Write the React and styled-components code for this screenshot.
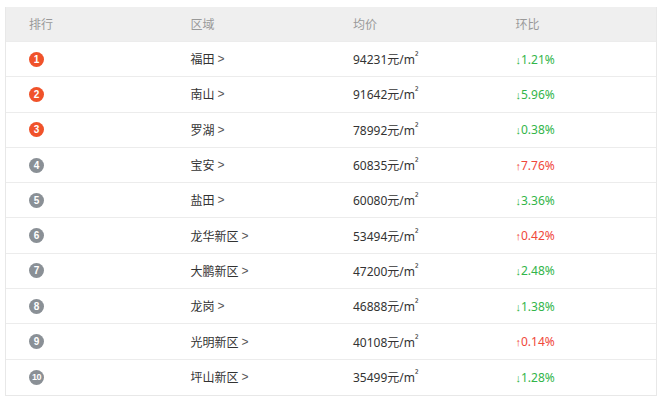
import React from "react";
import styled, { createGlobalStyle } from "styled-components";

const G = createGlobalStyle`
  body { margin: 0; background: #fff; font-family: "Noto Sans", "Noto Sans CJK SC", sans-serif; }
`;
const Wrap = styled.div`padding: 7px 3px 0 5px;`;
const Table = styled.div`border: 1px solid #e8e8e8; border-top: none; width: 650px;`;
const Row = styled.div`
  display: grid; grid-template-columns: repeat(4, 1fr); height: ${p => p.$head ? 35 : 35.3}px;
  align-items: center; background: ${p => p.$head ? "#efefef" : "#fff"};
  border-bottom: ${p => p.$last ? "none" : "1px solid #ececec"}; box-sizing: border-box;
  font-size: 12px; color: ${p => p.$head ? "#999" : "#333"};
`;
const Cell = styled.div`padding-left: ${p => p.$first ? 23 : 22}px; display: flex; align-items: center;`;
const Badge = styled.span`
  width: 15px; height: 15px; border-radius: 50%; background: ${p => p.$top ? "#f0522a" : "#8a9096"};
  color: #fff; font-size: ${p => p.$small ? 9 : 10}px; font-weight: bold; display: flex; align-items: center; justify-content: center;
  font-family: "Liberation Sans", sans-serif; letter-spacing: ${p => p.$small ? -0.5 : 0}px;
`;
const Chevron = styled.span`margin-left: 3px; font-family: "Liberation Sans", sans-serif; color: #555;`;
const Sup = styled.span`font-size: 10px; position: relative; top: -3px;`;
const Trend = styled.span`color: ${p => p.$up ? "#f0483a" : "#33b54a"};`;
const Arrow = styled.span`font-family: "Liberation Sans", sans-serif; font-size: 11px;`;

const data = [
  ["福田", "94231", "↓", "1.21%"], ["南山", "91642", "↓", "5.96%"], ["罗湖", "78992", "↓", "0.38%"],
  ["宝安", "60835", "↑", "7.76%"], ["盐田", "60080", "↓", "3.36%"], ["龙华新区", "53494", "↑", "0.42%"],
  ["大鹏新区", "47200", "↓", "2.48%"], ["龙岗", "46888", "↓", "1.38%"], ["光明新区", "40108", "↑", "0.14%"],
  ["坪山新区", "35499", "↓", "1.28%"],
];

export default function App() {
  return (
    <Wrap>
      <G />
      <Table>
        <Row $head><Cell $first>排行</Cell><Cell>区域</Cell><Cell>均价</Cell><Cell>环比</Cell></Row>
        {data.map(([a, p, ar, t], i) => (
          <Row key={i} $last={i === data.length - 1}>
            <Cell $first><Badge $top={i < 3} $small={i === 9}>{i + 1}</Badge></Cell>
            <Cell>{a}<Chevron>&gt;</Chevron></Cell>
            <Cell>{p}元/m<Sup>²</Sup></Cell>
            <Cell><Trend $up={ar === "↑"}><Arrow>{ar}</Arrow>{t}</Trend></Cell>
          </Row>
        ))}
      </Table>
    </Wrap>
  );
}
